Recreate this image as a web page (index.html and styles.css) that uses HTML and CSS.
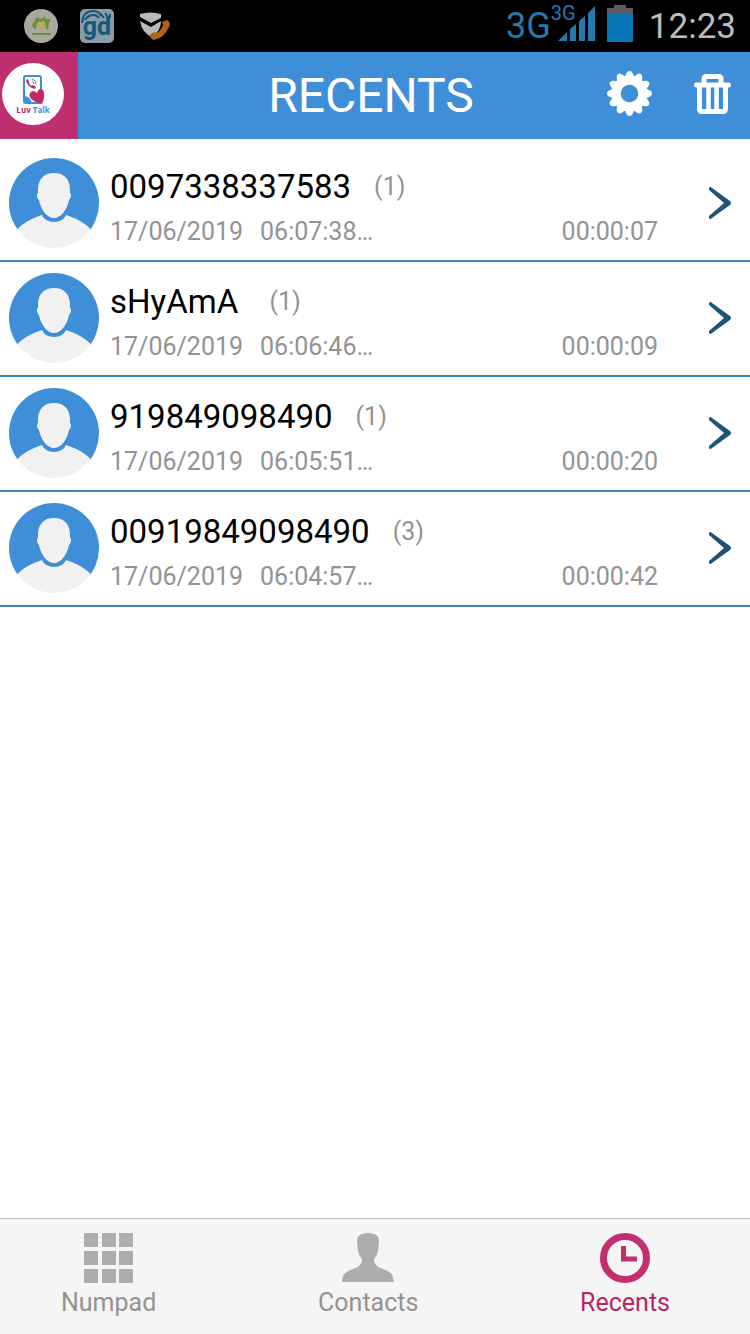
FILE: index.html
```html
<!DOCTYPE html>
<html lang="en">
<head>
<meta charset="utf-8">
<meta name="viewport" content="width=device-width, initial-scale=1">
<title>Recents</title>
<link rel="stylesheet" href="styles.css">
</head>
<body>
<svg class="defs" aria-hidden="true">
  <symbol id="avatar" viewBox="0 0 90 90">
    <clipPath id="disc"><circle cx="45" cy="45" r="45"/></clipPath>
    <g clip-path="url(#disc)">
      <path d="M0 0H90V72H0Z" fill="#3f8fd8"/>
      <path d="M0 82Q10 64 33 57Q36 64 45 64Q54 64 57 57Q80 64 90 82V90H0Z" fill="#f1f1f1"/>
      <path d="M45 15C55 15 61 21 61 32V35C63 36 62 40 60 42C58 52 52 60 45 60S32 52 30 42C28 40 27 36 29 35V32C29 21 35 15 45 15Z" fill="#f1f1f1"/>
    </g>
  </symbol>
  <symbol id="chevron" viewBox="0 0 22 32">
    <path d="M0 1Q1 -1 3 1L21 14Q23 16 21 18L3 31Q1 33 0 31V29L15 16L0 3Z" fill="#1f5478"/>
  </symbol>
</svg>
<div class="screen">
  <div class="status">
    <div class="notices">
      <svg width="34" height="34" viewBox="0 0 34 34" aria-hidden="true">
        <circle cx="17" cy="17" r="17" fill="#aaa6a0"/>
        <path d="M8 15L11 12L12 8L17 10L22 7L21 10L27 10L25 14L24 21L21 19L20 12L13 14L12 20L9 19Z" fill="#68953a"/>
        <path d="M13 14L20 12L22 18L18 21L14 19Z" fill="#c2a663"/>
        <path d="M8 25H27" stroke="#68953a" stroke-width="2"/>
      </svg>
      <svg width="34" height="34" viewBox="0 0 34 34" aria-hidden="true">
        <rect width="34" height="34" rx="5" fill="#8c9ba8"/>
        <path d="M2 14Q3 2 13 2Q19 2 21 7M5 11Q8 6 14 6Q17 6 19 9M20 4L24 9M25 4L28 8M30 5V9" fill="none" stroke="#14597c" stroke-width="2"/>
        <text x="17" y="26" class="gd">gd</text>
      </svg>
      <svg width="34" height="34" viewBox="0 0 34 34" aria-hidden="true">
        <path d="M4 5Q14 2 25 5V9L15 14L4 8Z" fill="#b9b9b9"/>
        <path d="M4 12L15 18L25 12Q25 22 16 28Q6 24 4 12Z" fill="#b9b9b9"/>
        <path d="M14 26L18 23L21 24Q26 20 27 16L26 13L31 11Q35 13 33 18Q28 29 18 31Q14 30 14 26Z" fill="#ae6518"/>
      </svg>
    </div>
    <div class="system">
      <span class="net">3G</span>
      <span class="signal">
        <span class="net-small">3G</span>
        <svg width="40" height="36" viewBox="0 0 40 36" aria-hidden="true" fill="#2579ab">
          <path d="M1 36L10 27V36ZM13 24L19 19V36H13ZM22 16L28 11V36H22ZM31 8L38 1V36H31Z"/>
        </svg>
      </span>
      <svg class="battery" width="26" height="37" viewBox="0 0 26 37" aria-label="Battery" role="img">
        <path d="M0 3H7V0H19V3H26V9H0Z" fill="#5c5c5c"/>
        <rect y="8" width="26" height="29" fill="#0875b5"/>
      </svg>
      <time class="clock">12:23</time>
    </div>
  </div>

  <header class="bar">
    <div class="brand">
      <svg width="62" height="62" viewBox="0 0 62 62" role="img" aria-label="Luv Talk">
        <circle cx="31" cy="31" r="31" fill="#fff"/>
        <rect x="22" y="13" width="17" height="27" rx="2" fill="#fff" stroke="#3f8fd8" stroke-width="2"/>
        <path d="M22 33Q28 33 30 40H22Z" fill="#3f8fd8"/>
        <path d="M24 17Q25 24 33 26L34 24L31 22L29 23Q27 21 27 19L26 16Z" fill="#c02a68"/>
        <path d="M30 16Q34 17 34 21M30 18Q32 19 32 21" fill="none" stroke="#6b7c8f"/>
        <path d="M40 41Q25 37 28 30Q31 26 35 30Q37 24 41 27Q44 32 40 41Z" fill="#c02a68"/>
        <text x="31" y="50" class="wordmark"><tspan fill="#c02a68">Luv</tspan> <tspan fill="#3f8fd8">Talk</tspan></text>
      </svg>
    </div>
    <h1 class="title">RECENTS</h1>
    <div class="actions">
      <button class="icon-button" type="button" aria-label="Settings">
        <svg width="45" height="45" viewBox="-22.500 -22.500 45 45" fill="#fff">
          <defs><path id="tooth" d="M-5 -16L-3 -20.500Q-2 -22.500 0 -22.500Q2 -22.500 3 -20.500L5 -16Z"/></defs>
          <circle r="13.500" fill="none" stroke="#fff" stroke-width="9"/>
          <circle r="9" fill="none" stroke="#fff" stroke-width="1" stroke-dasharray="1.300 1.300"/>
          <use href="#tooth"/><use href="#tooth" transform="rotate(30)"/><use href="#tooth" transform="rotate(60)"/>
          <use href="#tooth" transform="rotate(90)"/><use href="#tooth" transform="rotate(120)"/><use href="#tooth" transform="rotate(150)"/>
          <use href="#tooth" transform="rotate(180)"/><use href="#tooth" transform="rotate(210)"/><use href="#tooth" transform="rotate(240)"/>
          <use href="#tooth" transform="rotate(270)"/><use href="#tooth" transform="rotate(300)"/><use href="#tooth" transform="rotate(330)"/>
        </svg>
      </button>
      <button class="icon-button" type="button" aria-label="Delete all">
        <svg width="37" height="40" viewBox="0 0 37 40" fill="none" stroke="#fff">
          <path d="M10 10V5Q10 2.500 12.500 2.500H24.500Q27 2.500 27 5V10" stroke-width="5"/>
          <path d="M2.500 11H34.500" stroke-width="5" stroke-linecap="round"/>
          <path d="M5.500 12V35Q5.500 37.500 8 37.500H29Q31.500 37.500 31.500 35V12" stroke-width="5"/>
          <path d="M14.500 12V38M22.500 12V38" stroke-width="4.500"/>
        </svg>
      </button>
    </div>
  </header>

  <main class="content">
    <ul class="calls">
      <li class="call">
        <svg class="avatar" aria-hidden="true"><use href="#avatar"/></svg>
        <div class="details">
          <div class="who"><span class="name">0097338337583</span><span class="count">(1)</span></div>
          <div class="when"><span>17/06/2019</span><span>06:07:38…</span><span class="duration">00:00:07</span></div>
        </div>
        <button class="icon-button" type="button" aria-label="Details for 0097338337583"><svg class="chevron"><use href="#chevron"/></svg></button>
      </li>
      <li class="call">
        <svg class="avatar" aria-hidden="true"><use href="#avatar"/></svg>
        <div class="details">
          <div class="who"><span class="name">sHyAmA </span><span class="count">(1)</span></div>
          <div class="when"><span>17/06/2019</span><span>06:06:46…</span><span class="duration">00:00:09</span></div>
        </div>
        <button class="icon-button" type="button" aria-label="Details for sHyAmA"><svg class="chevron"><use href="#chevron"/></svg></button>
      </li>
      <li class="call">
        <svg class="avatar" aria-hidden="true"><use href="#avatar"/></svg>
        <div class="details">
          <div class="who"><span class="name">919849098490</span><span class="count">(1)</span></div>
          <div class="when"><span>17/06/2019</span><span>06:05:51…</span><span class="duration">00:00:20</span></div>
        </div>
        <button class="icon-button" type="button" aria-label="Details for 919849098490"><svg class="chevron"><use href="#chevron"/></svg></button>
      </li>
      <li class="call">
        <svg class="avatar" aria-hidden="true"><use href="#avatar"/></svg>
        <div class="details">
          <div class="who"><span class="name">00919849098490</span><span class="count">(3)</span></div>
          <div class="when"><span>17/06/2019</span><span>06:04:57…</span><span class="duration">00:00:42</span></div>
        </div>
        <button class="icon-button" type="button" aria-label="Details for 00919849098490"><svg class="chevron"><use href="#chevron"/></svg></button>
      </li>
    </ul>
  </main>

  <nav class="tabs">
    <a class="tab" href="#numpad">
      <svg width="50" height="50" viewBox="0 0 50 50" fill="#adadad" aria-hidden="true">
        <path d="M0 0H14V14H0ZM18 0H32V14H18ZM35 0H49V14H35ZM0 18H14V32H0ZM18 18H32V32H18ZM35 18H49V32H35ZM0 36H14V50H0ZM18 36H32V50H18ZM35 36H49V50H35Z"/>
      </svg>
      Numpad
    </a>
    <a class="tab" href="#contacts">
      <svg width="52" height="50" viewBox="0 0 52 50" fill="#adadad" aria-hidden="true">
        <path d="M20 1Q26 -1 32 1Q37 2 37 9L36 18Q35 23 32 26V29Q34 34 41 36Q48 39 50 41Q51 45 52 49H0Q0 45 2 41Q4 39 11 36Q18 34 20 29V26Q17 23 16 18L15 9Q15 2 20 1Z"/>
      </svg>
      Contacts
    </a>
    <a class="tab tab-active" href="#recents" aria-current="page">
      <svg width="50" height="50" viewBox="0 0 50 50" fill="none" stroke="#c22f70" aria-hidden="true">
        <circle cx="25" cy="25" r="21.500" stroke-width="7"/>
        <path d="M23.500 13V26H37" stroke-width="5"/>
      </svg>
      Recents
    </a>
  </nav>
</div>
</body>
</html>
```
FILE: styles.css
```css
* {
  box-sizing: border-box;
}

body {
  margin: 0;
  background: #fff;
  color: #000;
  font-family: Roboto, "Liberation Sans", sans-serif;
}

svg {
  display: block;
  flex: none;
}

.defs {
  position: absolute;
  width: 0;
  height: 0;
}

.screen {
  display: flex;
  flex-direction: column;
  min-height: 100vh;
}

.status {
  display: flex;
  align-items: center;
  justify-content: space-between;
  height: 52px;
  padding: 0 14px 0 24px;
  background: #000;
}

.notices {
  display: flex;
  gap: 22px;
}

.gd {
  fill: #14597c;
  font-size: 25px;
  font-weight: 700;
  text-anchor: middle;
}

.system {
  display: flex;
  align-items: center;
  color: #2579ab;
}

.net {
  font-size: 36px;
  line-height: 48px;
}

.signal {
  display: grid;
  margin-right: 10px;
  padding-bottom: 6px;
}

.signal > * {
  grid-area: 1 / 1;
}

.signal svg {
  margin-left: 6px;
}

.net-small {
  font-size: 20px;
  line-height: 16px;
}

.battery {
  margin-bottom: 6px;
}

.clock {
  margin-left: 16px;
  color: #bdbdbd;
  font-size: 35px;
  line-height: 50px;
  padding-top: 2px;
}

.bar {
  display: grid;
  grid-template-columns: 1fr auto 1fr;
  align-items: center;
  height: 87px;
  padding-right: 8px;
  background: #3f8fd8;
}

.brand {
  display: flex;
  align-items: center;
  width: 78px;
  height: 87px;
  padding: 0 0 4px 2px;
  background: #c02f70;
}

.wordmark {
  font-family: "Open Sans", sans-serif;
  font-size: 8px;
  font-weight: 700;
  text-anchor: middle;
}

.title {
  margin: 0;
  color: #fff;
  font-size: 48px;
  font-weight: 400;
  line-height: 56px;
}

.actions {
  display: flex;
  align-items: center;
  justify-content: flex-end;
  gap: 42px;
  padding: 0 11px 4px 0;
}

.icon-button {
  flex: none;
  padding: 0;
  border: 0;
  background: none;
  cursor: pointer;
}

.content {
  flex: 1;
}

.calls {
  margin: 0;
  padding: 8px 0 0;
  list-style: none;
}

.call {
  display: flex;
  align-items: center;
  padding: 11px 19px 12px 9px;
  border-bottom: 2px solid #3c85c4;
}

.avatar {
  width: 90px;
  height: 90px;
}

.details {
  flex: 1;
  padding: 7px 51px 0 11px;
}

.who {
  display: flex;
  align-items: center;
  gap: 23px;
  line-height: 40px;
}

.name {
  font-size: 33px;
  white-space: pre;
}

.count {
  color: #939393;
  font-size: 25px;
}

.when {
  display: flex;
  gap: 17px;
  margin-top: 10px;
  color: #939393;
  font-size: 25px;
  line-height: 30px;
}

.duration {
  margin-left: auto;
}

.chevron {
  width: 22px;
  height: 32px;
}

.tabs {
  display: flex;
  justify-content: space-between;
  padding: 14px 80px 16px 61px;
  border-top: 1px solid #c4c4c4;
  background: #f5f5f5;
}

.tab {
  display: flex;
  flex-direction: column;
  align-items: center;
  gap: 5px;
  color: #939393;
  font-size: 25px;
  line-height: 30px;
  text-decoration: none;
}

.tab-active {
  color: #b92562;
}
```
